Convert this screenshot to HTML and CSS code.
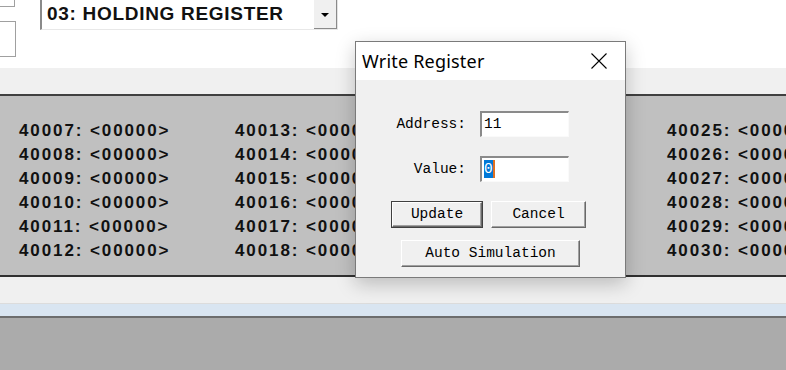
FILE: index.html
```html
<!DOCTYPE html>
<html lang="en">
<head>
  <meta charset="UTF-8">
  <meta name="viewport" content="width=device-width, initial-scale=1.0">
  <title>Modbus Slave</title>
  <link rel="stylesheet" href="styles.css">
</head>
<body>
  <div class="top">
    <div class="side">
      <div class="box1"></div>
      <div class="box2"></div>
    </div>
    <div class="combo">
      <span class="combo-text">03: HOLDING REGISTER</span>
      <span class="combo-btn"><span class="tri"></span></span>
    </div>
  </div>

  <div class="strip"></div>

  <div class="panel">
    <div class="col">
      <div>40007: &lt;00000&gt;</div>
      <div>40008: &lt;00000&gt;</div>
      <div>40009: &lt;00000&gt;</div>
      <div>40010: &lt;00000&gt;</div>
      <div>40011: &lt;00000&gt;</div>
      <div>40012: &lt;00000&gt;</div>
    </div>
    <div class="col">
      <div>40013: &lt;00000&gt;</div>
      <div>40014: &lt;00000&gt;</div>
      <div>40015: &lt;00000&gt;</div>
      <div>40016: &lt;00000&gt;</div>
      <div>40017: &lt;00000&gt;</div>
      <div>40018: &lt;00000&gt;</div>
    </div>
    <div class="col">
      <div>40019: &lt;00000&gt;</div>
      <div>40020: &lt;00000&gt;</div>
      <div>40021: &lt;00000&gt;</div>
      <div>40022: &lt;00000&gt;</div>
      <div>40023: &lt;00000&gt;</div>
      <div>40024: &lt;00000&gt;</div>
    </div>
    <div class="col">
      <div>40025: &lt;00000&gt;</div>
      <div>40026: &lt;00000&gt;</div>
      <div>40027: &lt;00000&gt;</div>
      <div>40028: &lt;00000&gt;</div>
      <div>40029: &lt;00000&gt;</div>
      <div>40030: &lt;00000&gt;</div>
    </div>
  </div>

  <div class="status"></div>
  <div class="band"></div>
  <div class="rest"></div>

  <div class="dialog">
    <div class="titlebar">
      <span class="title">Write Register</span>
      <svg class="close" width="16" height="16" viewBox="0 0 16 16">
        <path d="M0.5 0.5 L15.5 15.5 M15.5 0.5 L0.5 15.5" stroke="#000" stroke-width="1.1" fill="none"/>
      </svg>
    </div>
    <div class="body">
      <div class="row">
        <span class="label">Address:</span>
        <div class="field">11</div>
      </div>
      <div class="row">
        <span class="label">Value:</span>
        <div class="field"><span class="sel">0</span></div>
      </div>
      <div class="buttons">
        <div class="btn default">Update</div>
        <div class="btn cancel">Cancel</div>
      </div>
      <div class="buttons2">
        <div class="btn auto">Auto Simulation</div>
      </div>
    </div>
  </div>
</body>
</html>
```
FILE: styles.css
```css
html, body {
  margin: 0;
  padding: 0;
}
body {
  width: 786px;
  height: 370px;
  overflow: hidden;
  position: relative;
  background: #ababab;
  font-family: "Liberation Sans", Arial, sans-serif;
}

.top {
  height: 68px;
  background: #fff;
  display: flex;
  align-items: flex-start;
}
.side {
  width: 16px;
}
.box1 {
  width: 14px;
  height: 6px;
  border-right: 1px solid #a0a0a0;
  border-bottom: 1px solid #a0a0a0;
}
.box2 {
  margin-top: 14px;
  width: 15px;
  height: 34px;
  border: 1px solid #a0a0a0;
  border-left: none;
}
.combo {
  margin-left: 24px;
  width: 295px;
  height: 29px;
  border-left: 2px solid #8a8a8a;
  border-right: 1px solid #e3e3e3;
  border-bottom: 1px solid #e8e8e8;
  display: flex;
  align-items: flex-start;
  justify-content: space-between;
}
.combo-text {
  margin-left: 5px;
  margin-top: 3px;
  font-weight: bold;
  font-size: 19px;
  letter-spacing: 0.7px;
  color: #111;
}
.combo-btn {
  width: 23px;
  height: 29px;
  background: #f0f0f0;
  border-right: 1px solid #8a8a8a;
  border-bottom: 1px solid #8a8a8a;
  box-sizing: border-box;
  display: flex;
  align-items: center;
  justify-content: center;
}
.tri {
  width: 0;
  height: 0;
  margin-top: 1px;
  border-left: 4px solid transparent;
  border-right: 4px solid transparent;
  border-top: 4px solid #000;
}

.strip {
  height: 26px;
  background: #f0f0f0;
}

.panel {
  height: 156px;
  background: #c0c0c0;
  border-top: 2px solid #404040;
  border-bottom: 2px solid #303030;
  display: grid;
  grid-template-columns: repeat(4, 216px);
  padding: 23px 0 0 19px;
}
.col {
  font-weight: bold;
  font-size: 17px;
  letter-spacing: 1.9px;
  line-height: 24px;
  color: #111;
  white-space: nowrap;
}

.status {
  height: 26px;
  background: #f0f0f0;
  border-bottom: 1px solid #dcdcdc;
}
.band {
  height: 12px;
  background: #d9e5f1;
  border-bottom: 2px solid #6d6d6d;
}
.rest {
  height: 60px;
  background: #ababab;
}

.dialog {
  position: absolute;
  left: 355px;
  top: 41px;
  width: 269px;
  height: 235px;
  background: #f0f0f0;
  border: 1px solid #7a7a7a;
  box-shadow: 0 6px 18px rgba(0, 0, 0, 0.22);
}
.titlebar {
  height: 38px;
  background: #fff;
  display: flex;
  align-items: center;
  justify-content: space-between;
  padding: 0 18px 0 6px;
}
.title {
  font-family: "Noto Sans", "Open Sans", sans-serif;
  font-size: 18px;
  letter-spacing: 0.2px;
  color: #000;
}
.close {
  display: block;
}
.body {
  padding-top: 31px;
  font-family: "Liberation Mono", "Courier New", monospace;
  font-size: 14.5px;
  color: #000;
}
.row {
  display: flex;
  align-items: center;
  margin-bottom: 19px;
  padding-left: 30px;
}
.label {
  width: 80px;
  text-align: right;
  margin-right: 14px;
}
.field {
  width: 84px;
  height: 23px;
  background: #fff;
  border-top: 2px solid #8a8a8a;
  border-left: 2px solid #8a8a8a;
  border-right: 1px solid #fafafa;
  border-bottom: 1px solid #fafafa;
  padding-left: 2px;
  line-height: 23px;
}
.sel {
  background: #0078d7;
  color: #fff;
  padding: 1px 0;
  border-right: 2px solid #e07020;
}
.buttons {
  display: flex;
  gap: 9px;
  padding-left: 35px;
  margin-top: 2px;
}
.buttons2 {
  padding-left: 45px;
  margin-top: 12px;
}
.btn {
  height: 25px;
  line-height: 25px;
  text-align: center;
  background: #f0f0f0;
  border-top: 1px solid #fff;
  border-left: 1px solid #fff;
  border-right: 1px solid #696969;
  border-bottom: 1px solid #696969;
  box-shadow: inset -1px -1px #a0a0a0;
}
.btn.default {
  width: 88px;
  height: 23px;
  line-height: 23px;
  margin: 1px 0 0 1px;
  box-shadow: inset -1px -1px #a0a0a0, 0 0 0 1px #404040;
}
.btn.cancel {
  width: 93px;
}
.btn.auto {
  width: 177px;
}
```
